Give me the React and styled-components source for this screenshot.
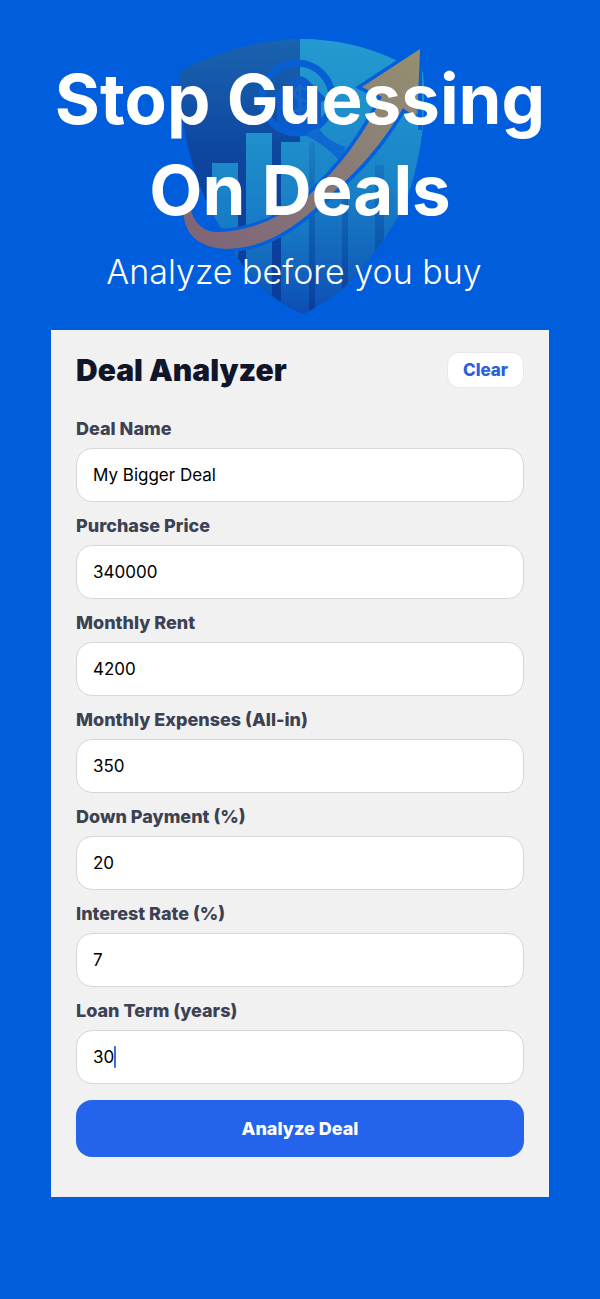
import React, { useState } from 'react';
import styled, { createGlobalStyle } from 'styled-components';

const GlobalStyle = createGlobalStyle`
    * {
        box-sizing: border-box;
    }

    body {
        margin: 0;
        background: #005ddb;
        font-family: Inter, 'Liberation Sans', sans-serif;
    }
`;

const Page = styled.main`
    min-height: 100vh;
    padding-bottom: 96px;
    background: #005ddb;
`;

const Hero = styled.header`
    position: relative;
    padding: 54px 16px 38px;
    text-align: center;
    color: #fff;
`;

const Shield = styled.svg`
    position: absolute;
    top: 36px;
    left: 50%;
    width: 250px;
    height: 282px;
    transform: translateX(-50%);
`;

const Headline = styled.h1`
    position: relative;
    margin: 0;
    font-size: 69px;
    font-weight: 700;
    line-height: 91px;
`;

const Tagline = styled.p`
    position: relative;
    margin: 16px 0 0;
    padding-right: 12px;
    font-size: 34px;
    font-weight: 300;
    line-height: 40px;
`;

const Card = styled.section`
    width: 83%;
    margin: 0 auto;
    padding: 22px 25px 40px;
    background: #f1f1f2;
`;

const CardHeader = styled.div`
    display: flex;
    align-items: center;
    justify-content: space-between;
    margin-bottom: 29px;
`;

const CardTitle = styled.h2`
    margin: 0;
    font-size: 30px;
    font-weight: 900;
    line-height: 36px;
    color: #111529;
`;

const ClearButton = styled.button`
    height: 36px;
    padding: 0 15px;
    border: 1px solid #e6e8ec;
    border-radius: 12px;
    background: #fff;
    color: #2b5fdc;
    font-family: inherit;
    font-size: 17px;
    font-weight: 800;
`;

const Form = styled.form`
    display: flex;
    flex-direction: column;
    gap: 12px;
`;

const Field = styled.div`
    display: flex;
    flex-direction: column;
    gap: 8px;
`;

const Label = styled.label`
    font-size: 18px;
    font-weight: 800;
    line-height: 23px;
    color: #3c4252;
`;

const InputWrap = styled.div`
    position: relative;
`;

const Input = styled.input`
    display: block;
    width: 100%;
    height: 54px;
    padding: 0 16px;
    border: 1px solid #d5d6d9;
    border-radius: 16px;
    outline: none;
    background: #fff;
    color: #000;
    font-family: inherit;
    font-size: 17px;
`;

const Caret = styled.span`
    position: absolute;
    top: 16px;
    left: 38px;
    width: 2px;
    height: 22px;
    border-radius: 1px;
    background: #4169e1;
`;

const SubmitButton = styled.button`
    height: 57px;
    margin-top: 4px;
    border: none;
    border-radius: 16px;
    background: #2463eb;
    color: #fff;
    font-family: inherit;
    font-size: 18px;
    font-weight: 800;
`;

const fields = [
    { id: 'name', label: 'Deal Name', value: 'My Bigger Deal' },
    { id: 'price', label: 'Purchase Price', value: '340000' },
    { id: 'rent', label: 'Monthly Rent', value: '4200' },
    { id: 'expenses', label: 'Monthly Expenses (All-in)', value: '350' },
    { id: 'down', label: 'Down Payment (%)', value: '20' },
    { id: 'rate', label: 'Interest Rate (%)', value: '7' },
    { id: 'term', label: 'Loan Term (years)', value: '30', active: true },
];

const initialDeal = Object.fromEntries(fields.map((field) => [field.id, field.value]));
const emptyDeal = Object.fromEntries(fields.map((field) => [field.id, '']));

const ShieldLogo = () => (
    <Shield viewBox="175 36 250 282" aria-hidden="true">
        <defs>
            <linearGradient id="navy" x1="0" y1="0" x2="0" y2="1">
                <stop offset="0" stopColor="#1a64b0" />
                <stop offset="0.45" stopColor="#0c449e" />
                <stop offset="1" stopColor="#0a3c9c" />
            </linearGradient>
            <linearGradient id="teal" x1="0" y1="0" x2="0" y2="1">
                <stop offset="0" stopColor="#249bd0" />
                <stop offset="0.5" stopColor="#1a85c8" />
                <stop offset="1" stopColor="#0d4db4" />
            </linearGradient>
            <linearGradient id="bar" gradientUnits="userSpaceOnUse" x1="0" y1="133" x2="0" y2="314">
                <stop offset="0" stopColor="#2090cc" />
                <stop offset="0.5" stopColor="#177bc5" />
                <stop offset="1" stopColor="#0d4db4" />
            </linearGradient>
            <linearGradient id="gap" gradientUnits="userSpaceOnUse" x1="0" y1="142" x2="0" y2="314">
                <stop offset="0" stopColor="#1a80c4" />
                <stop offset="0.6" stopColor="#0c57ae" />
                <stop offset="1" stopColor="#0a3c9c" />
            </linearGradient>
            <linearGradient id="arrow" x1="1" y1="0" x2="0" y2="1">
                <stop offset="0" stopColor="#95906f" />
                <stop offset="0.4" stopColor="#8a7e78" />
                <stop offset="1" stopColor="#7d6377" />
            </linearGradient>
            <clipPath id="body">
                <path d="M179 72Q235 41 301 39Q352 39 398 61L423 72Q427 120 417 163Q412 188 403 207Q382 248 346 286Q325 304 303 314Q262 297 237 257L212 213Q180 150 179 72Z" />
            </clipPath>
        </defs>
        <g clipPath="url(#body)">
            <rect x="175" y="36" width="126" height="282" fill="url(#navy)" />
            <rect x="300" y="36" width="128" height="282" fill="url(#teal)" />
            <path d="M212 163h26v155h-26zM246 133h26v185h-26zM281 142h28v176h-28z" fill="url(#bar)" />
            <path d="M309 142h6v176h-6zM342 150h6v168h-6zM375 165h9v153h-9z" fill="url(#gap)" />
            <circle cx="297" cy="98" r="35" fill="none" stroke="#075fd4" strokeWidth="7" />
            <path d="M305 135l13-8q8 14 28 20l-7 13q-15-16-34-25z" fill="#0f69d0" />
            <path d="M270 98l22-18q8-8 17 1l18 19-6 2v22q-20 12-44 0v-24z" fill="#0c5bcb" />
            <path d="M307 90q-9-4-12 1t6 8 5 8-12 3M300 84v32" fill="none" stroke="#1568ca" strokeWidth="3" />
            <path
                d="M420 49L362 87L382 97M416 118L403 108Q375 157 332 193Q275 250 228 248Q180 246 183 206L190 207Q196 233 220 232Q270 230 309 195Q354 155 382 97"
                fill="none"
                stroke="#045fda"
                strokeWidth="7"
            />
            <path d="M418 40h4v90h-4z" fill="#045fda" />
        </g>
        <path
            d="M183 206Q182 247 226 249Q275 249 325 199Q374 159 403 108L416 118Q419 86 420 49L362 87L382 97Q354 155 309 195Q266 230 220 232Q196 233 190 207Z"
            fill="url(#arrow)"
        />
    </Shield>
);

const App = () => {
    const [deal, setDeal] = useState(initialDeal);

    const handleChange = (event) => {
        setDeal({ ...deal, [event.target.name]: event.target.value });
    };

    return (
        <Page>
            <GlobalStyle />
            <Hero>
                <ShieldLogo />
                <Headline>
                    Stop Guessing
                    <br />
                    On Deals
                </Headline>
                <Tagline>Analyze before you buy</Tagline>
            </Hero>
            <Card>
                <CardHeader>
                    <CardTitle>Deal Analyzer</CardTitle>
                    <ClearButton type="button" onClick={() => setDeal(emptyDeal)}>
                        Clear
                    </ClearButton>
                </CardHeader>
                <Form onSubmit={(event) => event.preventDefault()}>
                    {fields.map((field) => (
                        <Field key={field.id}>
                            <Label htmlFor={field.id}>{field.label}</Label>
                            <InputWrap>
                                <Input
                                    id={field.id}
                                    name={field.id}
                                    value={deal[field.id]}
                                    onChange={handleChange}
                                />
                                {field.active && <Caret />}
                            </InputWrap>
                        </Field>
                    ))}
                    <SubmitButton type="submit">Analyze Deal</SubmitButton>
                </Form>
            </Card>
        </Page>
    );
};

export default App;
